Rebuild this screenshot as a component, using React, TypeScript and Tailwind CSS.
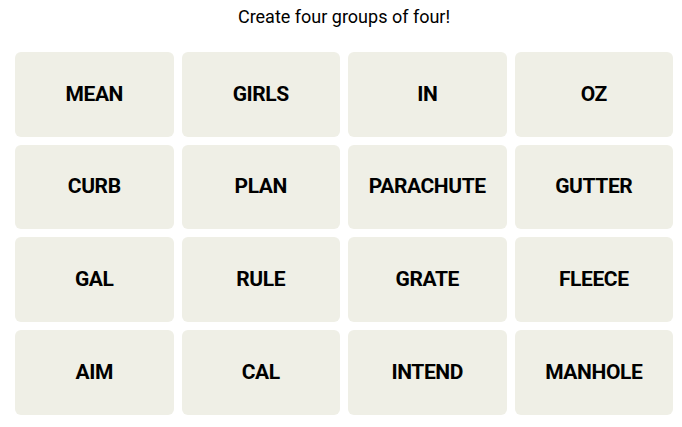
import React from "react";

const words = [
  "MEAN", "GIRLS", "IN", "OZ",
  "CURB", "PLAN", "PARACHUTE", "GUTTER",
  "GAL", "RULE", "GRATE", "FLEECE",
  "AIM", "CAL", "INTEND", "MANHOLE",
];

export default function App() {
  return (
    <div className="w-[682px] h-[427px] bg-white pl-[15px] pr-[9px]" style={{ fontFamily: "Roboto, 'Liberation Sans', sans-serif" }}>
      <div className="pt-[5px] h-[29px] text-[18px] leading-[24px] text-black text-center">Create four groups of four!</div>
      <div className="mt-[23px] w-[658px] grid grid-cols-4 gap-[8px]">
        {words.map((w) => (
          <div key={w} className="h-[84.67px] rounded-[6px] bg-[#efefe6] flex items-center justify-center text-[21px] tracking-[-0.4px] font-bold text-black">
            {w}
          </div>
        ))}
      </div>
    </div>
  );
}
